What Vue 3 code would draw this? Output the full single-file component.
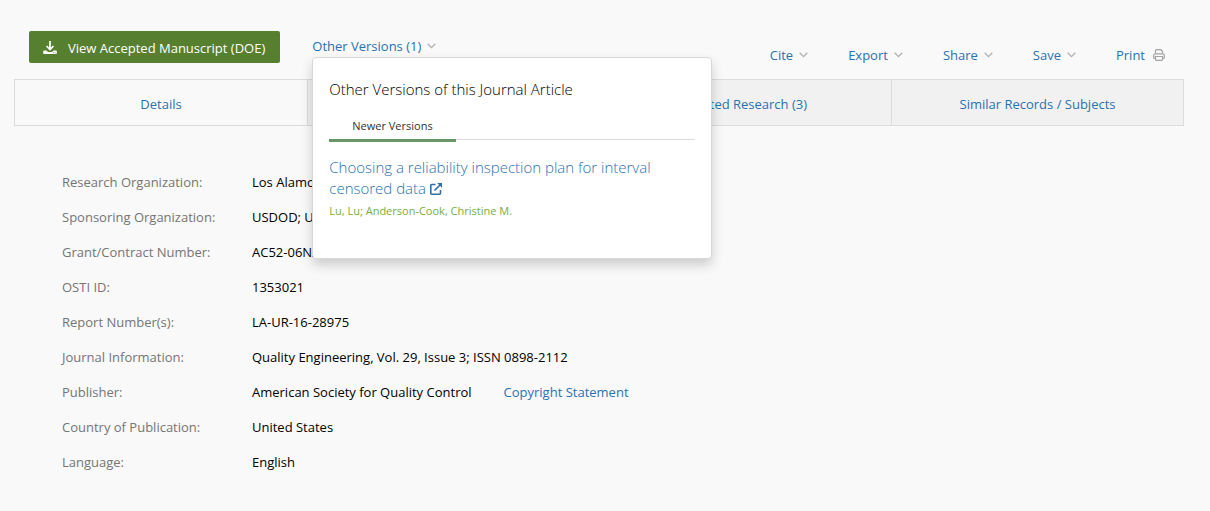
<script setup>
const tools = ['Cite', 'Export', 'Share', 'Save']
const tabs = [
  { text: 'Details' },
  { label: 'References' },
  { text: 'Related Research (3)' },
  { text: 'Similar Records / Subjects' },
]
const rows = [
  { label: 'Research Organization:', value: 'Los Alamos' },
  { label: 'Sponsoring Organization:', value: 'USDOD; US' },
  { label: 'Grant/Contract Number:', value: 'AC52-06NA' },
  { label: 'OSTI ID:', value: '1353021' },
  { label: 'Report Number(s):', value: 'LA-UR-16-28975' },
  { label: 'Journal Information:', value: 'Quality Engineering, Vol. 29, Issue 3; ISSN 0898-2112' },
  { label: 'Publisher:', value: 'American Society for Quality Control', link: 'Copyright Statement' },
  { label: 'Country of Publication:', value: 'United States' },
  { label: 'Language:', value: 'English' },
]
</script>

<template>
  <main class="page">
    <header class="toolbar">
      <a class="primary" href="#manuscript">
        <svg width="14" height="14" viewBox="0 0 14 14" aria-hidden="true">
          <path d="M7 0v8M3.500 5 7 8.500 10.500 5" fill="none" stroke="#fff" stroke-width="1.700" />
          <path d="M1 9.500h2.500L5 11h4l1.500-1.500H13a.8.8 0 0 1 .8.8v2a.8.8 0 0 1-.8.8H1a.8.8 0 0 1-.8-.8v-2a.8.8 0 0 1 .8-.8z" fill="#fff" />
          <path d="M10 11.800h.9M11.700 11.800h.9" stroke="#567f30" stroke-width=".8" />
        </svg>
        <span>View Accepted Manuscript (DOE)</span>
      </a>

      <div class="versions">
        <button type="button" class="menu" aria-expanded="true">
          <span>Other Versions (1)</span>
          <svg class="chevron" width="9" height="6" viewBox="0 0 9 6" aria-hidden="true">
            <path d="M.7.8 4.500 4.600 8.300.8" />
          </svg>
        </button>
        <section class="popup">
          <h2>Other Versions of this Journal Article</h2>
          <div class="popup-tabs">
            <button type="button">Newer Versions</button>
          </div>
          <a class="article" href="#article">Choosing a reliability inspection plan for interval censored data
            <svg width="12" height="12" viewBox="0 0 12 12" aria-hidden="true">
              <path d="M5.500 1.500H1.800a1 1 0 0 0-1 1v7.700a1 1 0 0 0 1 1h7.700a1 1 0 0 0 1-1V7M4.500 7.500 10 2" fill="none" stroke="#2f6ea8" stroke-width="1.600" />
              <path d="M7.200 0H12v4.800z" fill="#2f6ea8" />
            </svg>
          </a>
          <p>Lu, Lu; Anderson-Cook, Christine M.</p>
        </section>
      </div>

      <div class="tools">
        <button v-for="tool in tools" :key="tool" type="button" class="menu">
          <span>{{ tool }}</span>
          <svg class="chevron" width="9" height="6" viewBox="0 0 9 6" aria-hidden="true">
            <path d="M.7.8 4.500 4.600 8.300.8" />
          </svg>
        </button>
        <button type="button" class="menu print">
          <span>Print</span>
          <svg width="12" height="12" viewBox="0 0 12 12" fill="none" stroke="#a4a4a4" stroke-width="1.200" aria-hidden="true">
            <path d="M2.500 4.800V1.700q0-1 1-1h4.300l1.700 1.500v2.600M2.500 9.500h-.8q-1 0-1-1V6.300q0-1.500 1.500-1.500h7.600q1.500 0 1.500 1.500v2.200q0 1-1 1h-.8M2.500 7.500h7v2.800q0 1-1 1h-5q-1 0-1-1z" />
          </svg>
        </button>
      </div>
    </header>

    <nav class="tabs">
      <a v-for="(tab, i) in tabs" :key="i" href="#tab" :aria-label="tab.label" :class="{ active: i === 0 }">{{ tab.text }}</a>
    </nav>

    <dl class="details">
      <div v-for="row in rows" :key="row.label" class="row">
        <dt>{{ row.label }}</dt>
        <dd>{{ row.value }}<a v-if="row.link" href="#copyright">{{ row.link }}</a></dd>
      </div>
    </dl>
  </main>
</template>

<style>
body {
  margin: 0;
  background: #f9f9f9;
}
</style>

<style scoped>
.page {
  padding: 31px 26px 32px 14px;
  font-family: "Segoe UI", "Open Sans", "Noto Sans", sans-serif;
  font-size: 13px;
  line-height: 20px;
  color: #000;
}
a,
button {
  color: #2a71b0;
  text-decoration: none;
}
button {
  padding: 0;
  border: 0;
  background: none;
  font: inherit;
  cursor: pointer;
}
.toolbar {
  display: flex;
  align-items: flex-start;
  padding: 0 19px 0 15px;
}
.primary {
  display: flex;
  align-items: center;
  gap: 11px;
  box-sizing: border-box;
  height: 32px;
  padding: 2px 15px 0 14px;
  border-radius: 2px;
  background: #567f30;
  color: #fff;
  white-space: nowrap;
}
.versions {
  position: relative;
  margin-left: 32px;
  padding-top: 5px;
}
.menu {
  display: flex;
  align-items: center;
  gap: 6px;
  white-space: nowrap;
}
.chevron {
  fill: none;
  stroke: #b0b0b0;
  stroke-width: 1.3;
}
.tools {
  display: flex;
  gap: 40px;
  margin-left: auto;
  padding-top: 14px;
}
.print {
  gap: 8px;
}
.popup {
  position: absolute;
  z-index: 2;
  top: 26px;
  left: 0;
  box-sizing: border-box;
  width: 400px;
  padding: 19px 16px 37px;
  border: 1px solid #d8d8d8;
  border-radius: 4px;
  background: #fff;
  box-shadow: 0 6px 12px rgba(0, 0, 0, 0.18);
}
.popup h2 {
  margin: 0;
  font-size: 15px;
  font-weight: 300;
  line-height: 24px;
}
.popup-tabs {
  height: 38px;
  margin-bottom: 17px;
  border-bottom: 1px solid #dcdcdc;
}
.popup-tabs button {
  box-sizing: border-box;
  height: 41px;
  padding: 16px 23px 5px;
  border-bottom: 3px solid #679767;
  color: #333;
  font-size: 11px;
  line-height: 17px;
}
.article {
  display: block;
  font-size: 15px;
  font-weight: 300;
  line-height: 21px;
}
.article svg {
  vertical-align: -1px;
}
.popup p {
  margin: 2px 0 0;
  color: #78ae3c;
  font-size: 11px;
  line-height: 20px;
}
.tabs {
  display: grid;
  grid-template-columns: repeat(4, 1fr);
  margin-top: 14px;
  border: 1px solid #dcdcdc;
}
.tabs a {
  padding: 14px 8px 11px;
  background: #f1f1f1;
  text-align: center;
}
.tabs a + a {
  border-left: 1px solid #dcdcdc;
}
.tabs .active {
  background: #f9f9f9;
}
.details {
  margin: 38px 0 0 48px;
}
.row {
  display: grid;
  grid-template-columns: 190px 1fr;
  align-items: center;
  height: 35px;
}
dt {
  color: #757575;
}
dd {
  margin: 0;
}
dd a {
  margin-left: 32px;
}
</style>
